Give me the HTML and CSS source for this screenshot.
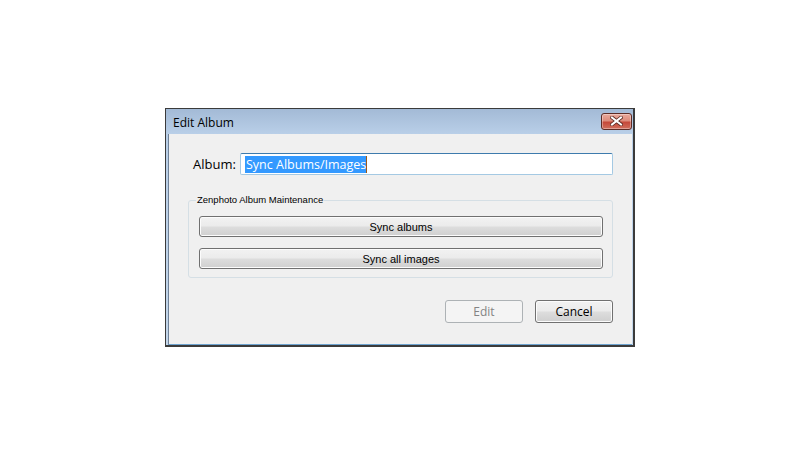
FILE: index.html
```html
<!DOCTYPE html>
<html>
<head>
<meta charset="utf-8">
<link rel="stylesheet" href="styles.css">
</head>
<body>
<div class="dialog">
  <div class="titlebar">
    <span class="title">Edit Album</span>
    <div class="close">
      <svg width="13" height="10" viewBox="0 0 13 10">
        <path d="M2 1.5 L11 8.5 M11 1.5 L2 8.5" stroke="#5a2a22" stroke-width="3.6" stroke-linecap="square" fill="none"/>
        <path d="M2 1.5 L11 8.5 M11 1.5 L2 8.5" stroke="#ffffff" stroke-width="2" stroke-linecap="square" fill="none"/>
      </svg>
    </div>
  </div>
  <div class="client">
    <div class="album-row">
      <span class="label">Album:</span>
      <div class="textbox"><span class="sel">Sync Albums/Images</span></div>
    </div>
    <fieldset class="group">
      <legend class="legend">Zenphoto Album Maintenance</legend>
      <button class="btn wide">Sync albums</button>
      <button class="btn wide">Sync all images</button>
    </fieldset>
    <div class="actions">
      <button class="btn action disabled">Edit</button>
      <button class="btn action">Cancel</button>
    </div>
  </div>
</div>
</body>
</html>
```
FILE: styles.css
```css
html, body {
  margin: 0;
  background: #ffffff;
}
body {
  padding: 108px 0 0 165px;
  font-family: "Open Sans", "Noto Sans", sans-serif;
}
.dialog {
  width: 464px;
  height: 236px;
  border: 1px solid #3b3b3b;
  border-right-width: 2px;
  border-bottom-width: 2px;
  background: linear-gradient(to bottom, #a3bad6 0px, #b9cfe8 25px, #c3d6ea 100%);
  display: flex;
  flex-direction: column;
  padding: 0 1px 0 2px;
  box-sizing: content-box;
}
.titlebar {
  height: 25px;
  display: flex;
  align-items: center;
  justify-content: space-between;
  padding: 0 0 0 5px;
}
.title {
  font-size: 12px;
  color: #000;
  margin-top: 1px;
}
.close {
  width: 29px;
  height: 15px;
  border: 1px solid #5d2c26;
  border-radius: 3px;
  background: linear-gradient(to bottom, #e9a99c 0%, #dd8c7c 45%, #c5493a 55%, #d0705e 100%);
  display: flex;
  align-items: center;
  justify-content: center;
  margin-top: -1px;
  box-shadow: inset 0 0 0 1px rgba(255,255,255,0.35);
}
.client {
  flex: 1;
  background: #f0f0f0;
  border-left: 1px solid #6f8198;
  border-bottom: 1px solid #6ea3cf;
  display: flex;
  flex-direction: column;
  padding: 19px 19px 0 18px;
}
.album-row {
  display: flex;
  align-items: center;
  padding-left: 6px;
}
.label {
  width: 47px;
  font-size: 13px;
  color: #000;
}
.textbox {
  flex: 1;
  height: 20px;
  background: #fff;
  border: 1px solid #a4c9e3;
  border-top-color: #3d7bad;
  border-radius: 2px;
  display: flex;
  align-items: center;
  padding-left: 4px;
}
.sel {
  background: #3399ff;
  color: #fff;
  font-size: 12.5px;
  line-height: 17px;
  padding: 0 0 0 1px;
  border-right: 1px solid #9a5a1a;
}
.group {
  margin: 19px 0 0 1px;
  border: 1px solid #d5dfe5;
  border-radius: 3px;
  padding: 10px 9px 8px 10px;
  display: flex;
  flex-direction: column;
  gap: 11px;
  min-width: 0;
}
.legend {
  font-family: "Liberation Sans", Arial, sans-serif;
  font-size: 9.5px;
  line-height: 12px;
  padding: 0 1px;
  margin-left: -3px;
  color: #000;
}
.btn {
  font-family: "Liberation Sans", Arial, sans-serif;
  font-size: 11px;
  color: #000;
  border: 1px solid #707070;
  border-radius: 3px;
  background: linear-gradient(to bottom, #f2f2f2 0%, #ebebeb 48%, #dddddd 52%, #cfcfcf 100%);
  box-shadow: inset 0 0 0 1px #fcfcfc;
  padding: 0;
  margin: 0;
}
.wide {
  height: 21px;
}
.actions {
  display: flex;
  justify-content: flex-end;
  gap: 12px;
  margin-top: 22px;
}
.action {
  width: 78px;
  height: 23px;
  font-family: "Open Sans", "Noto Sans", sans-serif;
  font-size: 12px;
}
.disabled {
  border-color: #adb2b5;
  background: #f4f4f4;
  color: #838383;
  box-shadow: none;
}
```
